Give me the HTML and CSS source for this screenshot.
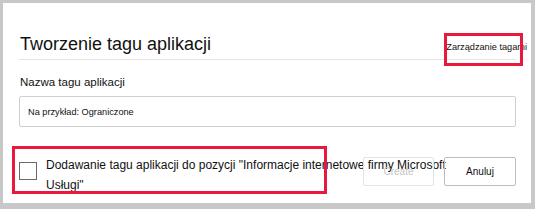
FILE: index.html
```html
<!DOCTYPE html>
<html lang="pl">
<head>
<meta charset="UTF-8">
<meta name="viewport" content="width=device-width, initial-scale=1.0">
<title>Tworzenie tagu aplikacji</title>
<link rel="stylesheet" href="styles.css">
</head>
<body>
<div class="panel">
    <div class="header">
        <h2 class="title">Tworzenie tagu aplikacji</h2>
        <a class="manage-link" href="#">Zarządzanie tagami</a>
    </div>
    <label class="field-label" for="tag-name">Nazwa tagu aplikacji</label>
    <input class="field-input" type="text" id="tag-name" placeholder="Na przykład: Ograniczone">
    <div class="footer">
        <label class="check-row">
            <span class="checkbox"></span>
            <span class="check-text">Dodawanie tagu aplikacji do pozycji "Informacje internetowe firmy Microsoft<br>Usługi"</span>
        </label>
        <div class="buttons">
            <button class="btn" disabled>Create</button>
            <button class="btn">Anuluj</button>
        </div>
    </div>
    <!-- ramki z adnotacji -->
    <div class="mark mark-link"></div>
    <div class="mark mark-check"></div>
</div>
</body>
</html>
```

FILE: styles.css
```css
* {
    box-sizing: border-box;
}
body {
    margin: 0;
    background-color: #c8c8c8;
    font-family: "Liberation Sans", Arial, sans-serif;
    color: #111111;
}
.panel {
    position: relative;
    margin: 3px 4px 6px 3px;
    height: 200px;
    background-color: #ffffff;
    padding: 0 15px 0 16px;
}
.header {
    display: flex;
    align-items: baseline;
    justify-content: space-between;
    padding: 30px 0 4px 1px;
    height: 57px;
    border-bottom: 1px solid #e6e6e6;
}
.title {
    margin: 0;
    font-size: 18px;
    font-weight: normal;
    line-height: 22px;
}
.manage-link {
    margin-right: -11px;
    font-size: 9.2px;
    color: #111111;
    text-decoration: none;
}
.field-label {
    display: block;
    margin: 14px 0 0 1px;
    font-size: 11.5px;
    line-height: 16px;
}
.field-input {
    display: block;
    width: 100%;
    height: 31px;
    margin-top: 6px;
    padding: 0 8px;
    border: 1px solid #cfcfcf;
    border-radius: 2px;
    font-family: inherit;
    font-size: 9.2px;
}
.field-input::placeholder {
    color: #111111;
}
.footer {
    display: flex;
    justify-content: space-between;
    align-items: flex-start;
    margin-top: 30px;
}
.check-row {
    display: flex;
    align-items: flex-start;
    width: 300px;
    white-space: nowrap;
}
.checkbox {
    flex: none;
    width: 18px;
    height: 18px;
    margin-top: 5px;
    border: 1px solid #6b6b6b;
}
.check-text {
    margin-left: 9px;
    font-size: 12px;
    line-height: 20px;
    margin-top: -2px;
}
.buttons {
    display: flex;
    gap: 10px;
}
.btn {
    width: 72px;
    height: 29px;
    background-color: transparent;
    border: 1px solid #bdbdbd;
    border-radius: 2px;
    font-family: inherit;
    font-size: 10px;
    color: #111111;
}
.btn:disabled {
    width: 71px;
    border-color: #e3e3e3;
    color: #c4c4c4;
}
.mark {
    position: absolute;
    border: 3px solid #e8193c;
}
.mark-link {
    left: 441px;
    top: 30px;
    width: 79px;
    height: 33px;
}
.mark-check {
    left: 9px;
    top: 143px;
    width: 315px;
    height: 48px;
}
```
